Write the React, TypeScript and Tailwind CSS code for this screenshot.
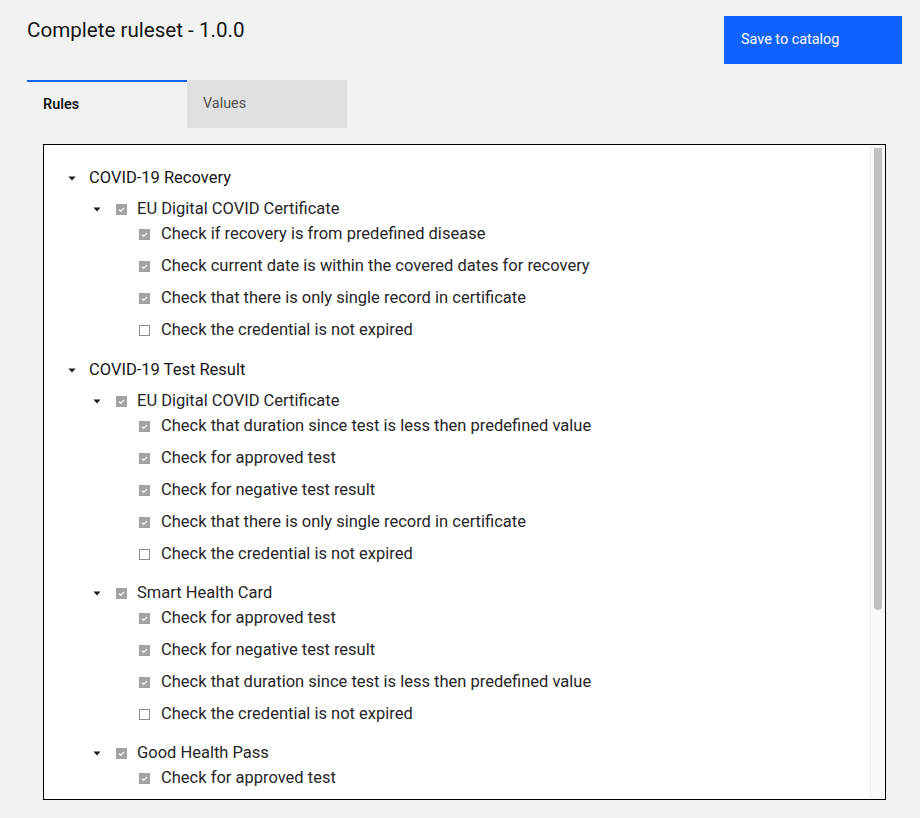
import React from 'react';

type Leaf = { label: string; checked: boolean };
type Credential = { name: string; items: Leaf[] };
type Group = { name: string; credentials: Credential[] };

const expired: Leaf = { label: 'Check the credential is not expired', checked: false };

const groups: Group[] = [
  {
    name: 'COVID-19 Recovery',
    credentials: [
      {
        name: 'EU Digital COVID Certificate',
        items: [
          { label: 'Check if recovery is from predefined disease', checked: true },
          { label: 'Check current date is within the covered dates for recovery', checked: true },
          { label: 'Check that there is only single record in certificate', checked: true },
          expired,
        ],
      },
    ],
  },
  {
    name: 'COVID-19 Test Result',
    credentials: [
      {
        name: 'EU Digital COVID Certificate',
        items: [
          { label: 'Check that duration since test is less then predefined value', checked: true },
          { label: 'Check for approved test', checked: true },
          { label: 'Check for negative test result', checked: true },
          { label: 'Check that there is only single record in certificate', checked: true },
          expired,
        ],
      },
      {
        name: 'Smart Health Card',
        items: [
          { label: 'Check for approved test', checked: true },
          { label: 'Check for negative test result', checked: true },
          { label: 'Check that duration since test is less then predefined value', checked: true },
          expired,
        ],
      },
      {
        name: 'Good Health Pass',
        items: [{ label: 'Check for approved test', checked: true }],
      },
    ],
  },
];

function Caret() {
  return (
    <svg width="8" height="8" viewBox="0 0 8 8" className="shrink-0">
      <path d="M0.5 2.5 L7.5 2.5 L4 6.5 Z" fill="#161616" />
    </svg>
  );
}

function Checkbox({ checked }: { checked: boolean }) {
  if (!checked) {
    return <span className="block w-[11px] h-[11px] shrink-0 border border-[#8d8d8d] bg-white" />;
  }
  return (
    <span className="flex items-center justify-center w-[11px] h-[11px] shrink-0 bg-[#a3a3a3]">
      <svg width="9" height="9" viewBox="0 0 9 9">
        <path d="M2 4.6 L3.8 6.3 L7 2.8" fill="none" stroke="#fff" strokeWidth="1.2" />
      </svg>
    </span>
  );
}

function CredentialNode({ credential, first }: { credential: Credential; first: boolean }) {
  return (
    <div className={first ? 'pt-[10px]' : 'pt-[14px]'}>
      <div className="flex items-center h-[18px] pl-[49px]">
        <Caret />
        <span className="ml-[15px]">
          <Checkbox checked />
        </span>
        <span className="ml-[10px] text-[#262626]">{credential.name}</span>
      </div>
      {credential.items.map((item, i) => (
        <div key={i} className="flex items-center h-8 pl-[95px]">
          <Checkbox checked={item.checked} />
          <span className="ml-[11px] text-[#262626]">{item.label}</span>
        </div>
      ))}
    </div>
  );
}

export default function App() {
  return (
    <div
      className="min-h-[818px] bg-[#f2f2f2] text-[#161616]"
      style={{ fontFamily: 'Roboto, "Liberation Sans", sans-serif' }}
    >
      <div className="flex items-start justify-between pt-4 pl-[27px] pr-[18px]">
        <h1 className="text-[20.6px] leading-7">Complete ruleset - 1.0.0</h1>
        <button className="w-[178px] h-12 bg-[#0f62fe] text-white text-[14.4px] text-left pl-[17px]">
          Save to catalog
        </button>
      </div>

      <div className="flex mt-4 ml-[27px]">
        <div className="w-40 h-12 border-t-2 border-[#0f62fe] flex items-center pl-4 text-[14.4px] font-semibold text-[#161616]">
          Rules
        </div>
        <div className="w-40 h-12 bg-[#e0e0e0] flex items-center pl-4 text-[14.4px] text-[#525252]">
          Values
        </div>
      </div>

      <div className="mt-4 ml-[43px] w-[843px] h-[656px] border border-black bg-white flex">
        <div className="flex-1 overflow-hidden pt-[21px] text-[16.5px]">
          {groups.map((g, gi) => (
            <div key={g.name} className={gi > 0 ? 'mt-3' : ''}>
              <div className="flex items-center h-6 pl-6">
                <Caret />
                <span className="ml-[13px]">{g.name}</span>
              </div>
              {g.credentials.map((c, ci) => (
                <CredentialNode key={ci} credential={c} first={ci === 0} />
              ))}
            </div>
          ))}
        </div>
        <div className="w-[15px] shrink-0 border-l border-[#e8e8e8] bg-[#f9f9f9] pt-[3px] pl-[3px]">
          <div className="w-2 h-[462px] rounded-b-[4px] bg-[#c1c1c1]" />
        </div>
      </div>
    </div>
  );
}
